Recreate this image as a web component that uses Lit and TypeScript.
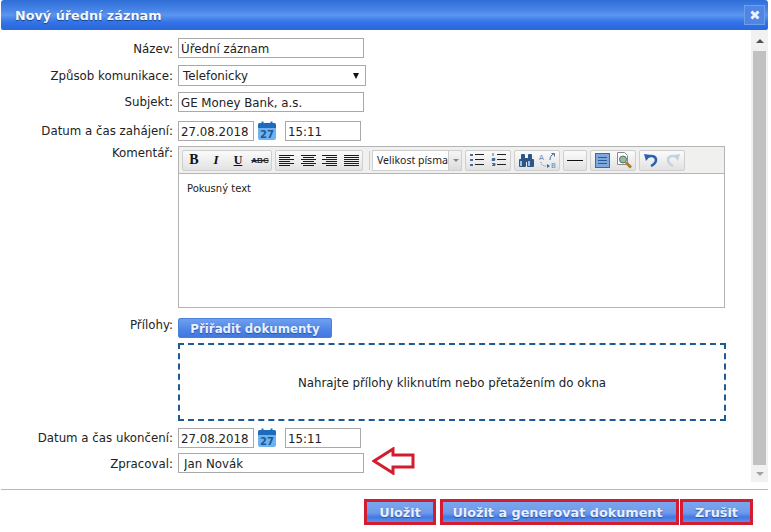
import { LitElement, html, css, svg } from "lit";
import { customElement } from "lit/decorators.js";

const cal = html`<svg class="cal" width="18" height="20" viewBox="0 0 18 20">
  <rect x="0" y="2" width="18" height="17" rx="2" fill="#6fb2ee"/>
  <path d="M0 7V4a2 2 0 0 1 2-2h14a2 2 0 0 1 2 2v3z" fill="#1c6cbd"/>
  <rect x="3.5" y="0.5" width="2" height="3" fill="#1c6cbd"/><rect x="12.5" y="0.5" width="2" height="3" fill="#1c6cbd"/>
  <text x="9" y="17" text-anchor="middle" class="calt">27</text></svg>`;

const lines = (xs: [number, number][]) =>
  html`<svg width="15" height="11" viewBox="0 0 15 11">${xs.map(
    ([a, b], i) => svg`<rect x="${a}" y="${i * 2}" width="${b}" height="1" fill="#1c1c1c"/>`
  )}</svg>`;

@customElement("app-root")
export class AppRoot extends LitElement {
  static styles = css`
    :host { display: block; width: 771px; height: 532px; background: #fff; font: 11.8px "DejaVu Sans", Verdana, sans-serif; color: #222; overflow: hidden; position: relative; }
    .dialog { width: 768px; height: 532px; display: flex; flex-direction: column; }
    .title { height: 30px; margin-left: 1px; flex: none; border-radius: 3px 3px 2px 2px; background: linear-gradient(#2f6ed8, #4a86e8 35%, #5c96f0 50%, #3272e6 75%, #2a68dc); display: flex; align-items: center; justify-content: space-between; padding: 0 3px 0 14px; box-sizing: border-box; color: #f4f8ff; font-weight: bold; font-size: 12.8px; text-shadow: 0 1px 1px #16407f; }
    .x { width: 21px; height: 20px; border: 1px solid #6f9de8; background: #4f86e6; box-sizing: border-box; display: flex; align-items: center; justify-content: center; }
    .body { flex: 1; display: flex; min-height: 0; }
    .form { flex: 1; padding-top: 8px; display: flex; flex-direction: column; }
    .row { display: flex; }
    .lab { width: 173px; flex: none; text-align: right; padding-top: 4px; line-height: 14px; }
    .lab.top { padding-top: 0; }
    .lab.mid { padding-top: 3px; }
    .ctl { margin-left: 5px; display: flex; align-items: flex-start; }
    input { font: 11.8px "DejaVu Sans", sans-serif; color: #222; height: 20px; box-sizing: border-box; border: 1px solid #a9a9a9; padding: 1px 2px 0; margin: 0; }
    .w186 { width: 186px; }
    .w186.pad { padding-left: 5px; }
    .w76 { width: 76px; }
    .sel { width: 188px; height: 21px; box-sizing: border-box; border: 1px solid #a9a9a9; display: flex; align-items: center; justify-content: space-between; padding: 0 5px 0 4px; }
    .tri { width: 0; height: 0; border: 3px solid transparent; border-top: 6px solid #111; border-bottom: 0; margin-right: 1px; }
    .cal { margin: 0 9px 0 4px; display: block; }
    .calt { font: bold 10px "DejaVu Sans", sans-serif; fill: #1a5a99; }
    .editor { width: 547px; height: 162px; box-sizing: border-box; border: 1px solid #b4b4b4; display: flex; flex-direction: column; }
    .tb { height: 27px; flex: none; box-sizing: border-box; background: #f0f0ee; border-bottom: 1px solid #b4b4b4; display: flex; align-items: center; padding-left: 3px; gap: 3px; }
    .grp { height: 21px; box-sizing: border-box; border: 1px solid #cfcfcf; border-radius: 2px; background: linear-gradient(#fbfbfb, #e2e2e2); display: flex; align-items: center; }
    .ic { width: 22px; height: 19px; display: flex; align-items: center; justify-content: center; }
    .ic.w21 { width: 21.5px; }
    .ic b { font: bold 14px "Liberation Serif", serif; color: #111; }
    .ic i { font: italic bold 13px "Liberation Serif", serif; color: #111; }
    .ic u { font: bold 12px "Liberation Serif", serif; color: #111; }
    .ic s { font: bold 8px "Liberation Sans", sans-serif; color: #222; }
    .ra { font: 7px "DejaVu Sans", sans-serif; fill: #5f7fa6; }
    .rb { font: 7px "DejaVu Sans", sans-serif; fill: #4f86c6; }
    .fsz { width: 90px; height: 21px; box-sizing: border-box; border: 1px solid #cfcfcf; background: #fff; display: flex; align-items: center; font: 10.5px "Noto Sans", sans-serif; padding-left: 4px; justify-content: space-between; white-space: nowrap; overflow: hidden; }
    .arr { width: 15px; height: 19px; flex: none; box-sizing: border-box; background: linear-gradient(#f5f5f5, #dcdcdc); border-left: 1px solid #ccc; display: flex; align-items: center; justify-content: center; }
    .arr span { width: 0; height: 0; border: 3px solid transparent; border-top: 3px solid #888; border-bottom: 0; }
    .sep { width: 1px; height: 19px; background: #ccc; margin: 0 -1px 0 3px; }
    .txt { padding: 9px 8px; font-size: 10px; color: #222; }
    .assign { width: 154px; height: 20px; box-sizing: border-box; border: 1px solid #4a80d8; border-radius: 2px; padding-top: 1px; background: linear-gradient(#6f9ff0, #4e84e6 60%, #4078e0); color: #e8f0ff; font-weight: bold; font-size: 11.8px; display: flex; align-items: center; justify-content: center; text-shadow: 0 1px 1px #2a55a0; }
    .drop { width: 548px; height: 78px; box-sizing: border-box; border: 2px dashed #1d5a96; padding-top: 2px; display: flex; align-items: center; justify-content: center; margin-top: 5px; }
    .scroll { width: 17px; flex: none; background: #f1f1f1; display: flex; flex-direction: column; align-items: center; height: 452px; }
    .up { height: 21px; flex: none; display: flex; align-items: center; justify-content: center; }
    .down { height: 17px; flex: none; display: flex; align-items: center; justify-content: center; }
    .thumb { width: 13px; flex: 1; background: #c1c1c1; }
    .tu { width: 0; height: 0; border: 4px solid transparent; border-bottom: 4px solid #505050; border-top: 0; }
    .td { width: 0; height: 0; border: 4px solid transparent; border-top: 4px solid #a3a3a3; border-bottom: 0; }
    .hr { flex: none; height: 1px; background: #b9b9b9; margin-top: 7px; margin-left: 1px; }
    .foot { flex: none; height: 42px; display: flex; justify-content: flex-end; padding: 9px 15px 0 0; box-sizing: border-box; }
    .btn { box-sizing: border-box; height: 26px; border: 3px solid #d31c30; font-weight: bold; color: #e8f0ff; font-size: 12.8px; display: flex; align-items: center; justify-content: center; background: linear-gradient(#7aa6ee, #6d99ea 55%, #4377e4 75%, #5f90ea); text-shadow: 0 1px 1px #2a55a0; }
    .b1 { width: 72px; }
    .b2 { width: 239px; margin: 0 1px 0 4px; padding-right: 4px; }
    .b3 { width: 73px; }
    .arrow { position: absolute; left: 372px; top: 447px; }
    .m7 { margin-top: 7px; } .m6 { margin-top: 6px; } .m9 { margin-top: 9px; } .m5 { margin-top: 5px; } .m10 { margin-top: 10px; }
  `;

  render() {
    return html`<div class="dialog">
      <div class="title"><span>Nový úřední záznam</span>
        <span class="x"><svg width="12" height="12" viewBox="0 0 12 12"><path d="M2.5 2.5l7 7M9.5 2.5l-7 7" stroke="#eef4ff" stroke-width="3"/></svg></span></div>
      <div class="body">
        <div class="form">
          <div class="row"><div class="lab">Název:</div><div class="ctl"><input class="w186" value="Úřední záznam"></div></div>
          <div class="row m7"><div class="lab">Způsob komunikace:</div><div class="ctl"><div class="sel"><span>Telefonicky</span><span class="tri"></span></div></div></div>
          <div class="row m6"><div class="lab mid">Subjekt:</div><div class="ctl"><input class="w186" value="GE Money Bank, a.s."></div></div>
          <div class="row m9"><div class="lab mid">Datum a čas zahájení:</div><div class="ctl"><input class="w76" value="27.08.2018">${cal}<input class="w76" value="15:11"></div></div>
          <div class="row m5"><div class="lab top">Komentář:</div><div class="ctl"><div class="editor">
            <div class="tb">
              <div class="grp"><span class="ic"><b>B</b></span><span class="ic"><i>I</i></span><span class="ic"><u>U</u></span><span class="ic"><s>ABC</s></span></div>
              <div class="grp"><span class="ic w21">${lines([[0,15],[0,11],[0,15],[0,11],[0,15],[0,11]])}</span><span class="ic w21">${lines([[0,15],[2,11],[0,15],[2,11],[0,15],[2,11]])}</span><span class="ic w21">${lines([[0,15],[4,11],[0,15],[4,11],[0,15],[4,11]])}</span><span class="ic w21">${lines([[0,15],[0,15],[0,15],[0,15],[0,15],[0,15]])}</span></div>
              <div class="sep"></div>
              <div class="fsz"><span>Velikost písma</span><span class="arr"><span></span></span></div>
              <div class="grp">
                <span class="ic"><svg width="16" height="14" viewBox="0 0 16 14"><g fill="#4a6a90"><rect x="1" y="1" width="3" height="2"/><rect x="1" y="6" width="3" height="2"/><rect x="1" y="11" width="3" height="2"/></g><g fill="#222"><rect x="6" y="1" width="9" height="1"/><rect x="6" y="6" width="9" height="1"/><rect x="6" y="11" width="9" height="1"/></g></svg></span>
                <span class="ic"><svg width="16" height="14" viewBox="0 0 16 14"><g fill="none" stroke="#4a6a90"><path d="M2 0v3M1 5.5h3v1H1v1h3M1 10.5h3v1H2h2v1H1"/></g><g fill="#222"><rect x="6" y="1" width="9" height="1"/><rect x="6" y="6" width="9" height="1"/><rect x="6" y="11" width="9" height="1"/></g></svg></span>
              </div>
              <div class="grp">
                <span class="ic"><svg width="17" height="15" viewBox="0 0 17 15"><g fill="#2c5688"><rect x="3" y="1" width="4" height="6" rx="1"/><rect x="10" y="1" width="4" height="6" rx="1"/><rect x="1" y="6" width="7" height="8" rx="1"/><rect x="9" y="6" width="7" height="8" rx="1"/><rect x="7" y="5" width="3" height="4"/></g><g fill="#9fc0e2"><rect x="2" y="8" width="2" height="5"/><rect x="10" y="8" width="2" height="5"/></g></svg></span>
                <span class="ic"><svg width="20" height="17" viewBox="0 0 20 17"><text x="1" y="8" class="ra">A</text><path d="M12 8c0-3 1-5 4-6M13.5 1.5h3v3" fill="none" stroke="#4a6f98"/><path d="M3 10c0 3 2 4 6 4" fill="none" stroke="#6a8ab0" stroke-dasharray="1 1"/><path d="M9 12l3 2-3 2z" fill="#3a6aa8"/><text x="13" y="16" class="rb">B</text></svg></span>
              </div>
              <div class="grp"><span class="ic"><svg width="16" height="3" viewBox="0 0 16 3"><rect y="1" width="16" height="1" fill="#111"/></svg></span></div>
              <div class="grp">
                <span class="ic"><svg width="15" height="15" viewBox="0 0 15 15"><rect x=".5" y=".5" width="14" height="14" fill="#7fa8de" stroke="#3a68a8"/><g fill="#2c5a9c"><rect x="3" y="4" width="9" height="1"/><rect x="3" y="7" width="9" height="1"/><rect x="3" y="10" width="9" height="1"/></g></svg></span>
                <span class="ic"><svg width="17" height="17" viewBox="0 0 17 17"><path d="M1.5 .5h7l3 3v9h-10z" fill="#fff" stroke="#8a8a8a"/><circle cx="7" cy="7.5" r="3.5" fill="#8fbf9a" stroke="#5c6a70"/><path d="M10 10.5l5 5" stroke="#a8802c" stroke-width="3"/></svg></span>
              </div>
              <div class="grp">
                <span class="ic"><svg width="16" height="14" viewBox="0 0 16 14"><path d="M1 1l7 1-5 6z" fill="#2a62b0"/><path d="M5 4c3-2 8-1 8 3 0 3-3 5-5 6" fill="none" stroke="#2a62b0" stroke-width="2.5"/></svg></span>
                <span class="ic"><svg width="16" height="14" viewBox="0 0 16 14"><path d="M15 1l-7 1 5 6z" fill="#c6d2de"/><path d="M11 4c-3-2-8-1-8 3 0 3 3 5 5 6" fill="none" stroke="#c6d2de" stroke-width="2.5"/></svg></span>
              </div>
            </div>
            <div class="txt">Pokusný text</div>
          </div></div></div>
          <div class="row m10"><div class="lab top">Přílohy:</div><div class="ctl"><div><div class="assign">Přiřadit dokumenty</div><div class="drop">Nahrajte přílohy kliknutím nebo přetažením do okna</div></div></div></div>
          <div class="row m7"><div class="lab mid">Datum a čas ukončení:</div><div class="ctl"><input class="w76" value="27.08.2018">${cal}<input class="w76" value="15:11"></div></div>
          <div class="row m5"><div class="lab">Zpracoval:</div><div class="ctl"><input class="w186 pad" value="Jan Novák"></div></div>
        </div>
        <div class="scroll"><div class="up"><span class="tu"></span></div><div class="thumb"></div><div class="down"><span class="td"></span></div></div>
      </div>
      <div class="hr"></div>
      <div class="foot">
        <div class="btn b1">Uložit</div>
        <div class="btn b2">Uložit a generovat dokument</div>
        <div class="btn b3">Zrušit</div>
      </div>
    </div>
    <svg class="arrow" width="44" height="28" viewBox="0 0 44 28"><path d="M2 14L21 2v6h20v12H21v6z" fill="#fff" stroke="#d31c30" stroke-width="3"/></svg>`;
  }
}
